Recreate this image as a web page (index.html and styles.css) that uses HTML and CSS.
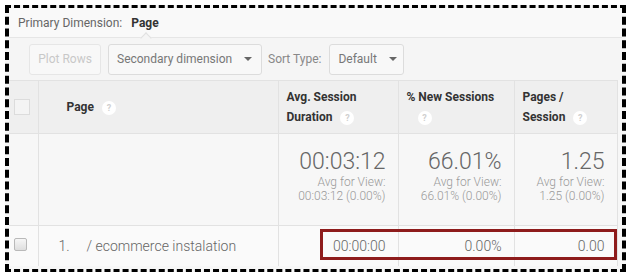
FILE: index.html
```html
<!DOCTYPE html>
<html>
<head>
<meta charset="utf-8">
<link rel="stylesheet" href="styles.css">
</head>
<body>
<div class="frame">
  <div class="primary">
    <span class="pd-label">Primary Dimension:</span>
    <span class="pd-value">Page</span>
    <span class="notch"></span>
  </div>
  <div class="toolbar">
    <button class="btn btn-disabled">Plot Rows</button>
    <button class="btn btn-sec">Secondary dimension <span class="caret"></span></button>
    <span class="sort-label">Sort Type:</span>
    <button class="btn btn-default">Default <span class="caret"></span></button>
  </div>
  <div class="table-wrap">
    <table class="grid">
      <colgroup>
        <col class="c-check"><col class="c-page"><col class="c-avg"><col class="c-new"><col class="c-pps">
      </colgroup>
      <tr class="head">
        <td class="chk"><span class="box-head"></span></td>
        <td class="h-page">Page <span class="help">?</span></td>
        <td class="h-metric">Avg. Session<br>Duration <span class="help">?</span></td>
        <td class="h-metric">% New Sessions<br><span class="help help-indent">?</span></td>
        <td class="h-metric">Pages /<br>Session <span class="help">?</span></td>
      </tr>
      <tr class="summary">
        <td></td>
        <td></td>
        <td class="sum"><div class="big">00:03:12</div><div class="small">Avg for View:<br>00:03:12 (0.00%)</div></td>
        <td class="sum"><div class="big">66.01%</div><div class="small">Avg for View:<br>66.01% (0.00%)</div></td>
        <td class="sum"><div class="big">1.25</div><div class="small">Avg for View:<br>1.25 (0.00%)</div></td>
      </tr>
      <tr class="data">
        <td class="chk"><span class="box-row"></span></td>
        <td class="d-page"><span class="idx">1.</span>/ ecommerce instalation</td>
        <td class="num">00:00:00</td>
        <td class="num">0.00%</td>
        <td class="num">0.00</td>
      </tr>
    </table>
    <div class="highlight"></div>
  </div>
</div>
</body>
</html>
```

FILE: styles.css
```css
html, body {
  margin: 0;
  padding: 0;
  background: #ffffff;
}
body {
  width: 630px;
  height: 278px;
  font-family: Roboto, "Liberation Sans", sans-serif;
  overflow: hidden;
}
.frame {
  margin: 5px 4px 0 5px;
  width: 613px;
  height: 261px;
  border: 4px dashed #000;
  border-top-width: 3px;
  border-bottom-width: 3px;
  background: #f7f7f7;
  overflow: hidden;
}
.primary {
  position: relative;
  height: 29px;
  border-bottom: 1px solid #e6e6e6;
  background: #f9f9f9;
  display: flex;
  align-items: center;
  padding-left: 9px;
  font-size: 12px;
}
.pd-label {
  color: #666;
  margin-right: 9px;
}
.pd-value {
  color: #333;
  font-weight: 700;
}
.notch {
  position: absolute;
  left: 133px;
  bottom: -1px;
  width: 7px;
  height: 7px;
  background: #f5f5f5;
  border-left: 1px solid #e0e0e0;
  border-top: 1px solid #e0e0e0;
  transform: translateY(4px) rotate(45deg);
}
.toolbar {
  height: 42px;
  display: flex;
  align-items: center;
  padding-left: 20px;
  background: #f5f5f5;
  box-sizing: border-box;
}
.btn {
  height: 31px;
  border: 1px solid #dcdcdc;
  border-radius: 3px;
  background: #f8f8f8;
  font-family: inherit;
  font-size: 12px;
  color: #777;
  padding: 0 8px;
  display: flex;
  align-items: center;
  box-sizing: border-box;
}
.btn-disabled {
  width: 72px;
  color: #c8c8c8;
  justify-content: center;
  padding: 0;
  border-color: #e6e6e6;
}
.btn-sec {
  width: 154px;
  margin-left: 7px;
}
.btn-default {
  width: 75px;
}
.caret {
  display: inline-block;
  width: 0;
  height: 0;
  border-left: 4px solid transparent;
  border-right: 4px solid transparent;
  border-top: 4px solid #666;
  margin-left: 12px;
}
.sort-label {
  color: #888;
  font-size: 12px;
  margin: 0 8px 0 6px;
}
.table-wrap {
  position: relative;
}
.grid {
  border-collapse: collapse;
  table-layout: fixed;
  width: 608px;
}
.c-check { width: 29px; }
.c-page { width: 240px; }
.c-avg { width: 120px; }
.c-new { width: 116px; }
.c-pps { width: 103px; }
.grid td {
  border-right: 1px solid #e2e2e2;
  border-top: 1px solid #e2e2e2;
  padding: 0;
  vertical-align: middle;
}
.head td {
  background: #efefef;
  height: 52px;
  font-size: 12px;
  font-weight: 700;
  color: #333;
}
.chk {
  text-align: left;
}
.box-head {
  display: block;
  width: 14px;
  height: 14px;
  margin-left: 5px;
  border: 1px solid #dcdcdc;
  background: #f4f4f4;
}
.h-page {
  padding-left: 28px !important;
}
.h-metric {
  padding: 0 8px !important;
  line-height: 20px;
}
.help {
  display: inline-block;
  width: 14px;
  height: 14px;
  border-radius: 50%;
  background: #ffffff;
  color: #d0d0d0;
  font-size: 9px;
  font-weight: 700;
  line-height: 14px;
  text-align: center;
  margin-left: 5px;
  vertical-align: 0;
}
.help-indent {
  margin-left: 11px;
}
.summary td {
  background: #f7f7f7;
  height: 91px;
}
.sum {
  text-align: right;
  padding-right: 12px !important;
  vertical-align: top !important;
}
.big {
  font-size: 23px;
  font-weight: 300;
  color: #666;
  margin-top: 15px;
  line-height: 26px;
}
.small {
  font-size: 12px;
  font-weight: 300;
  color: #999;
  line-height: 14px;
  margin-top: 0;
}
.data td {
  background: #fafafa;
  height: 40px;
  font-size: 14px;
  font-weight: 300;
  color: #666;
}
.box-row {
  display: block;
  width: 11px;
  height: 11px;
  margin-left: 5px;
  margin-top: -3px;
  border: 1px solid #b9b9b9;
  border-radius: 2px;
  background: linear-gradient(#f6f6f6, #dedede);
}
.d-page {
  padding-left: 20px !important;
  vertical-align: middle;
}
.idx {
  display: inline-block;
  width: 28px;
}
.num {
  text-align: right;
  padding-right: 12px !important;
}
.highlight {
  position: absolute;
  left: 311px;
  top: 149px;
  width: 291px;
  height: 25px;
  border: 3px solid #8e1c1c;
  pointer-events: none;
}
```
